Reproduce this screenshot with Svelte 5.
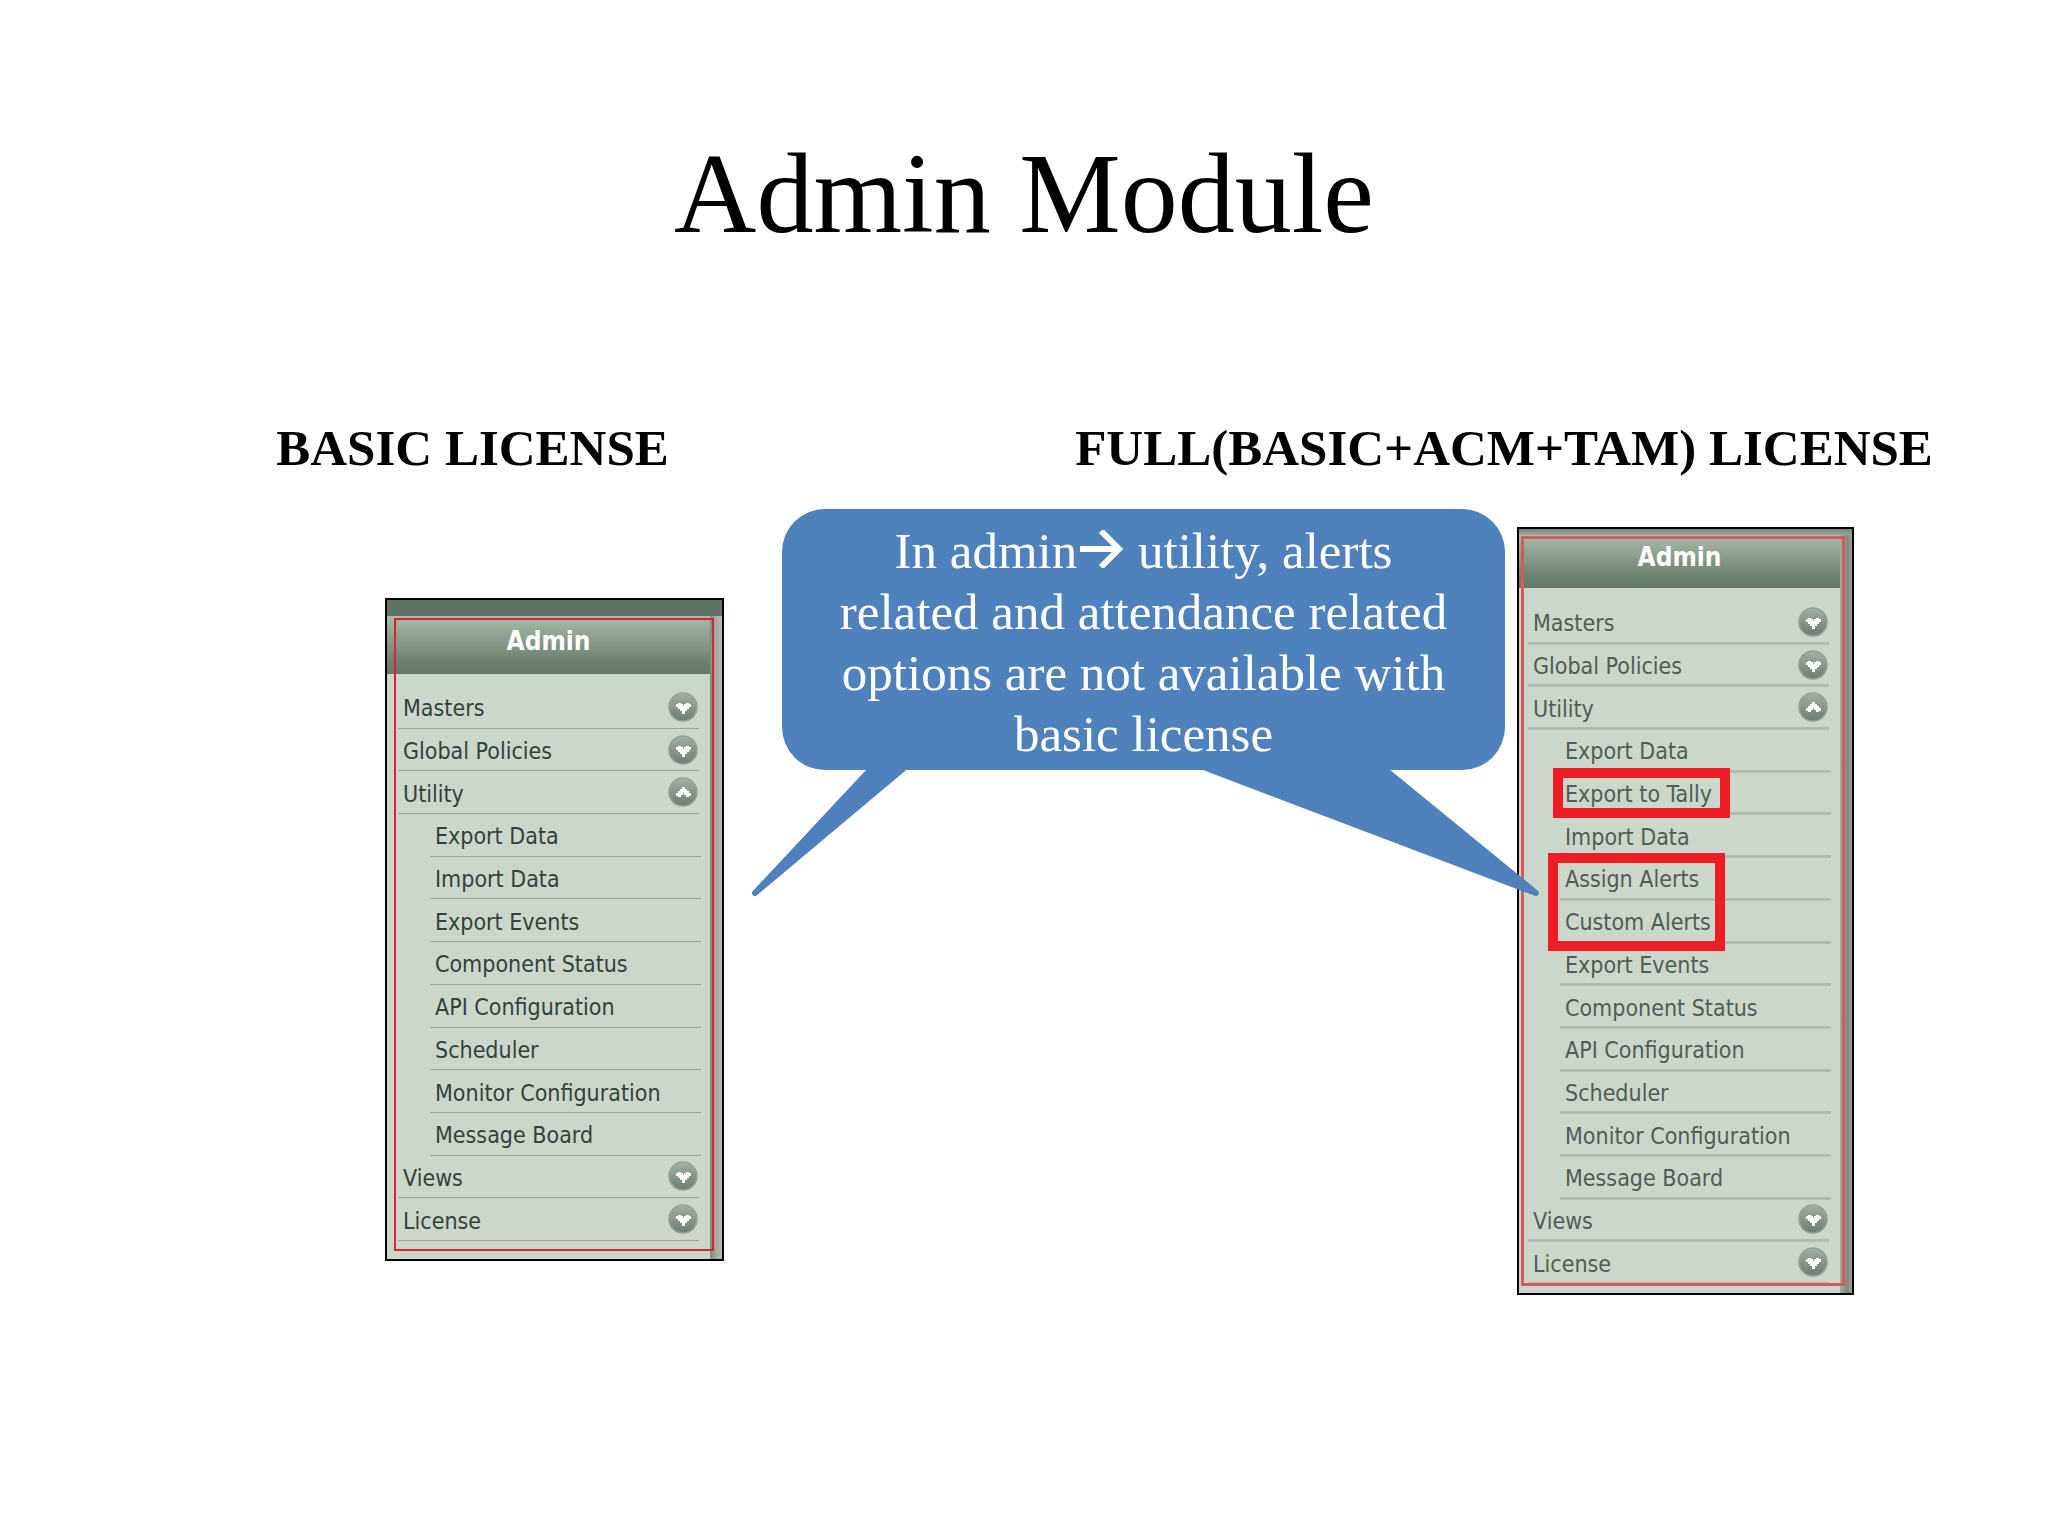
<script>
    const before = ['Masters', 'Global Policies', 'Utility'];
    const after = ['Views', 'License'];

    const basicUtility = [
        'Export Data', 'Import Data', 'Export Events', 'Component Status',
        'API Configuration', 'Scheduler', 'Monitor Configuration', 'Message Board'
    ];
    const fullUtility = [
        'Export Data', 'Export to Tally', 'Import Data', 'Assign Alerts', 'Custom Alerts',
        'Export Events', 'Component Status', 'API Configuration', 'Scheduler',
        'Monitor Configuration', 'Message Board'
    ];

    // Red markers: first row covered, number of rows, left edge and overlap below
    const marks = [
        { row: 4, span: 1, left: 25, below: 3 },
        { row: 6, span: 2, left: 20, below: 7 }
    ];

    function buildRows(utility) {
        return [
            ...before.map((label) => ({ label, group: true, open: label === 'Utility' })),
            ...utility.map((label) => ({ label, group: false })),
            ...after.map((label) => ({ label, group: true, open: false }))
        ];
    }
</script>

{#snippet menu(kind, rows, marked)}
    <nav class="panel {kind}" aria-label="Admin, {kind} license">
        <div class="body">
            <div class="strip"></div>
            <h3>Admin</h3>
            <ul>
                {#each rows as row}
                    <li class:sub={!row.group}>
                        {#if row.group}
                            <button type="button" aria-expanded={row.open}>
                                <span>{row.label}</span>
                                <svg class="knob" viewBox="0 0 30 30" aria-hidden="true">
                                    <circle cx="15" cy="15" r="14" fill="url(#knob)" stroke="#93a196" stroke-width="1.5" />
                                    <path
                                        d={row.open
                                            ? 'M8 16h2v-2h2v-2h2v-2h3v2h2v2h2v2h2v3h-2v1h-3v-2h-2v-2h-1v2h-2v2h-3v-1h-2z'
                                            : 'M8 12h2v-1h3v1h2v2h1v-2h2v-1h3v1h2v3h-2v2h-2v2h-2v3h-3v-3h-2v-2h-2v-2h-2z'}
                                        fill="#fff"
                                    />
                                </svg>
                            </button>
                        {:else}
                            <a href="#{row.label.toLowerCase().replaceAll(' ', '-')}"><span>{row.label}</span></a>
                        {/if}
                    </li>
                {/each}
                {#each marked as m}
                    <li
                        class="mark"
                        aria-hidden="true"
                        style="left: {m.left}px; top: calc({(m.row / rows.length) * 100}% - 5px); bottom: calc({(1 - (m.row + m.span) / rows.length) * 100}% - {m.below}px)"
                    ></li>
                {/each}
            </ul>
        </div>
        <div class="edge"></div>
        <div class="outline"></div>
    </nav>
{/snippet}

<svg class="defs" aria-hidden="true">
    <linearGradient id="knob" x1="0" y1="0" x2="0" y2="1">
        <stop offset="0" stop-color="#a3b0a5" />
        <stop offset="1" stop-color="#6d7c71" />
    </linearGradient>
</svg>

<main>
    <h1>Admin Module</h1>

    <div class="titles">
        <h2>BASIC LICENSE</h2>
        <h2>FULL(BASIC+ACM+TAM) LICENSE</h2>
    </div>

    <div class="compare">
        {@render menu('basic', buildRows(basicUtility), [])}

        <div class="callout">
            <svg class="tails" viewBox="0 0 790 130" aria-hidden="true">
                <path d="M123 0L6 125L155 0z" />
                <path d="M457 0L787 125L634 0z" />
            </svg>
            <p>
                In admin<svg class="arrow" viewBox="0 0 48 38" aria-hidden="true">
                    <path d="M3 19H42M24 1L42 19L24 37" />
                </svg> utility, alerts<br />
                related and attendance related<br />
                options are not available with<br />
                basic license
            </p>
        </div>

        {@render menu('full', buildRows(fullUtility), marks)}
    </div>
</main>

<style>
    :global(body) {
        margin: 0;
        background: #fff;
    }

    main {
        padding: 128px 0 64px;
        font-family: "Liberation Serif", "Times New Roman", serif;
        color: #000;
    }

    .defs {
        position: absolute;
        width: 0;
        height: 0;
    }

    h1 {
        margin: 0;
        font-size: 114px;
        line-height: 132px;
        font-weight: 400;
        text-align: center;
    }

    .titles {
        display: grid;
        grid-template-columns: 276fr auto 406fr auto 115fr;
        margin-top: 158px;
    }

    h2 {
        margin: 0;
        font-size: 51px;
        line-height: 60px;
        font-weight: 700;
        white-space: nowrap;
        grid-column: 2;
    }

    h2 + h2 {
        grid-column: 4;
    }

    .compare {
        display: grid;
        grid-template-columns: 385fr 339px 58fr 723px 12fr 337px 194fr;
        align-items: start;
        margin-top: 31px;
    }

    /* Menu panels */
    .panel {
        position: relative;
        display: flex;
        border: 2px solid #000;
        background: #cbd7cb;
        font-family: "DejaVu Sans Condensed", "DejaVu Sans", sans-serif;
    }

    .basic {
        grid-column: 2;
        margin-top: 89px;
        --text: #34413c;
        --line: #97a59a;
        --line-width: 1px;
        --frame: #d9252d;
    }

    .full {
        grid-column: 6;
        margin-top: 18px;
        --text: #4f5d56;
        --line: #b0beb1;
        --line-width: 3px;
        --frame: #d9585a;
    }

    .body {
        flex: 1;
    }

    .strip {
        height: 16px;
        margin-right: -12px;
        background: #5f7266;
    }

    .full .strip {
        height: 6px;
        background: linear-gradient(#75857a, #9aa89c);
    }

    h3 {
        margin: 0;
        padding-bottom: 8px;
        font-size: 26px;
        line-height: 50px;
        font-weight: 700;
        text-align: center;
        color: #fff;
        background: linear-gradient(#a9bba9, #8a9d8e 40%, #6c8070 80%, #65796b);
    }

    .full h3 {
        line-height: 45px;
    }

    ul {
        position: relative;
        display: grid;
        grid-auto-rows: 1fr;
        height: 555px;
        margin: 12px 11px 18px;
        padding: 0;
        list-style: none;
    }

    .full ul {
        height: 683px;
        margin: 14px 11px 8px 9px;
    }

    li {
        display: flex;
        border-bottom: var(--line-width) solid var(--line);
    }

    .sub {
        margin: 0 -2px 0 32px;
    }

    button,
    a {
        display: flex;
        flex: 1;
        align-items: center;
        justify-content: space-between;
        padding: 0 0 0 5px;
        border: 0;
        background: none;
        font: inherit;
        font-size: 23px;
        line-height: 28px;
        color: var(--text);
        text-decoration: none;
        white-space: nowrap;
        cursor: pointer;
    }

    button span,
    a span {
        padding-top: 3px;
    }

    .knob {
        width: 30px;
        height: 30px;
        margin-right: 1px;
    }

    .edge {
        width: 12px;
        background: linear-gradient(90deg, #7e8a80, #a3aca2 50%, #b4bab0);
    }

    .basic .edge {
        margin-top: 16px;
    }

    .full .edge {
        margin-top: 6px;
        background: linear-gradient(90deg, #a3aea3, #7f8c82 60%, #95a196);
    }

    .outline {
        position: absolute;
        inset: 18px 8px 8px 7px;
        border: 2px solid var(--frame);
        pointer-events: none;
    }

    .full .outline {
        inset: 7px 7px 7px 2px;
        border-width: 3px;
    }

    .mark {
        position: absolute;
        width: 157px;
        border: 10px solid #ee1c25;
        pointer-events: none;
    }

    /* Speech bubble between the two menus */
    .callout {
        position: relative;
        z-index: 1;
        grid-column: 4;
        box-sizing: border-box;
        min-height: 261px;
        padding: 12px 50px 5px;
        border-radius: 43px;
        background: #4f81bd;
        color: #fff;
    }

    p {
        margin: 0;
        font-size: 51px;
        line-height: 61px;
        text-align: center;
    }

    .arrow {
        width: 48px;
        height: 38px;
        fill: none;
        stroke: #fff;
        stroke-width: 6px;
    }

    .tails {
        position: absolute;
        top: 100%;
        left: -33px;
        width: 790px;
        height: 130px;
        margin-top: -2px;
        fill: #4f81bd;
        stroke: #4f81bd;
        stroke-width: 6px;
        stroke-linejoin: round;
    }
</style>
